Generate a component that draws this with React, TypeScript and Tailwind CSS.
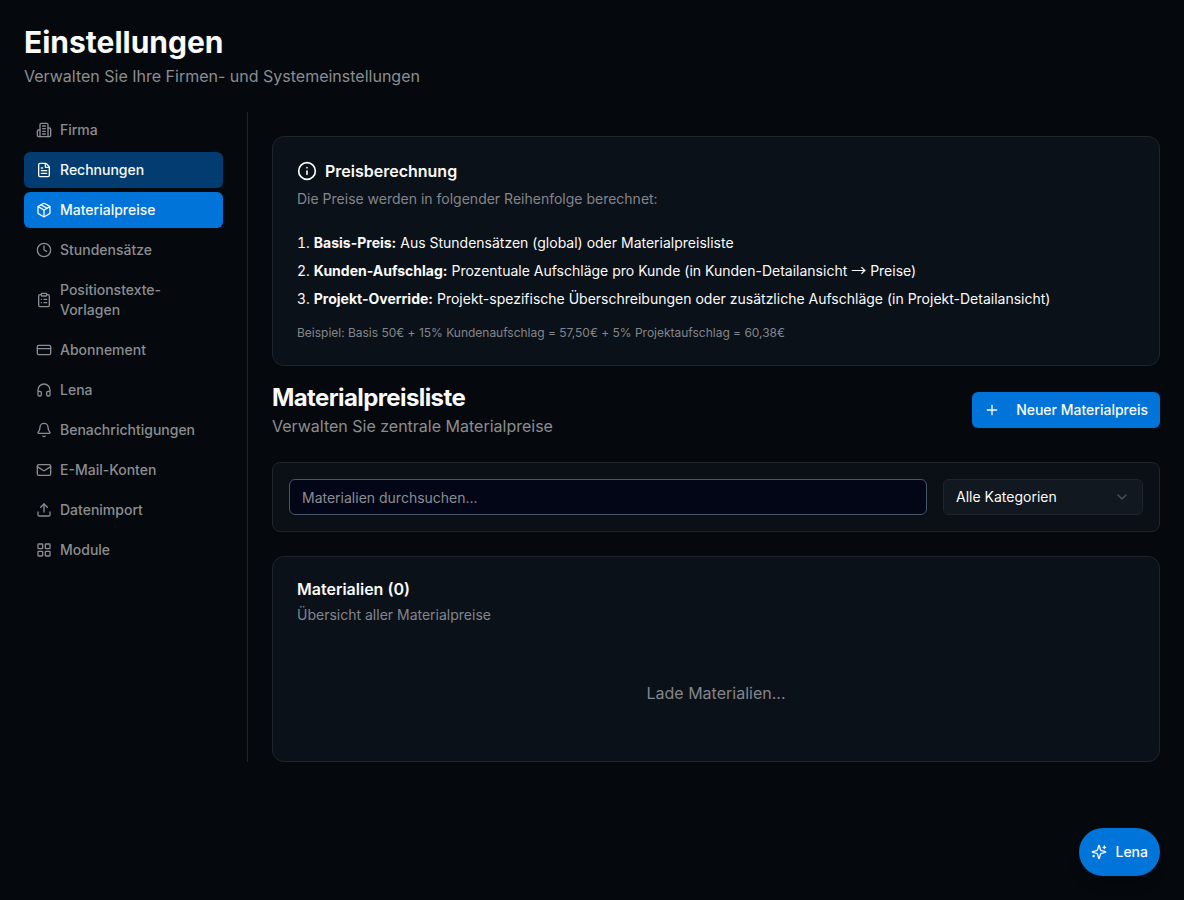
import { Building2, FileText, Package, Clock, ClipboardList, CreditCard, Headphones, Bell, Mail, Upload, LayoutGrid, Info, Plus, ChevronDown, type LucideIcon } from 'lucide-react';

const nav: { label: string; icon: LucideIcon; state?: 'hover' | 'active' }[] = [
  { label: 'Firma', icon: Building2 },
  { label: 'Rechnungen', icon: FileText, state: 'hover' },
  { label: 'Materialpreise', icon: Package, state: 'active' },
  { label: 'Stundensätze', icon: Clock },
  { label: 'Positionstexte-Vorlagen', icon: ClipboardList },
  { label: 'Abonnement', icon: CreditCard },
  { label: 'Lena', icon: Headphones },
  { label: 'Benachrichtigungen', icon: Bell },
  { label: 'E-Mail-Konten', icon: Mail },
  { label: 'Datenimport', icon: Upload },
  { label: 'Module', icon: LayoutGrid },
];

const tone = {
  idle: 'text-[#8b8d91]',
  hover: 'bg-[#023c70] text-[#f8fafc]',
  active: 'bg-[#0074d9] text-[#f8fafc]',
};

const stroke = { fill: 'none', stroke: 'currentColor', strokeWidth: 2, strokeLinecap: 'round', strokeLinejoin: 'round' } as const;

function BuildingIcon({ className }: { className?: string }) {
  return (
    <svg viewBox="0 0 24 24" className={className} {...stroke}>
      <path d="M6 22V4a2 2 0 0 1 2-2h8a2 2 0 0 1 2 2v18Z" />
      <path d="M6 12H4a2 2 0 0 0-2 2v6a2 2 0 0 0 2 2h2" />
      <path d="M18 9h2a2 2 0 0 1 2 2v9a2 2 0 0 1-2 2h-2" />
      <path d="M10 6h4M10 10h4M10 14h4M10 18h4" />
    </svg>
  );
}

function SparklesIcon({ className }: { className?: string }) {
  return (
    <svg viewBox="0 0 24 24" className={className} {...stroke}>
      <path d="M9.937 15.5A2 2 0 0 0 8.5 14.063l-6.135-1.582a.5.5 0 0 1 0-.962L8.5 9.936A2 2 0 0 0 9.937 8.5l1.582-6.135a.5.5 0 0 1 .963 0L14.063 8.5A2 2 0 0 0 15.5 9.937l6.135 1.581a.5.5 0 0 1 0 .964L15.5 14.063a2 2 0 0 0-1.437 1.437l-1.582 6.135a.5.5 0 0 1-.963 0z" />
      <path d="M20 3v4M22 5h-4M4 17v2M5 18H3" />
    </svg>
  );
}

export default function App() {
  return (
    <div className="relative h-[900px] overflow-hidden bg-[#05090d] p-6 font-['Inter',sans-serif] text-base text-[#fafafa] antialiased">
      <header>
        <h1 className="text-3xl font-bold">Einstellungen</h1>
        <p className="mt-1 text-[#8b8d91]">Verwalten Sie Ihre Firmen- und Systemeinstellungen</p>
      </header>
      <div className="mt-6 flex h-[650px]">
        <nav className="flex w-56 shrink-0 flex-col gap-1 border-r border-[#20252b] pr-6">
          {nav.map(({ label, icon: Icon, state }) => (
            <a key={label} className={`flex items-center gap-2 rounded-md px-3 py-2 text-sm font-medium ${tone[state ?? 'idle']}`}>
              {Icon === Building2 ? <BuildingIcon className="size-4 shrink-0" /> : <Icon className="size-4 shrink-0" />}
              <span>{label}</span>
            </a>
          ))}
        </nav>
        <main className="min-w-0 flex-1 pt-6 pl-6">
          <section className="h-[230px] rounded-xl border border-[#20252b] bg-[#0b1118] p-6">
            <h2 className="flex h-5 items-center gap-2 font-semibold"><Info className="size-5" />Preisberechnung</h2>
            <p className="mt-2 text-sm text-[#83858c]">Die Preise werden in folgender Reihenfolge berechnet:</p>
            <ol className="mt-6 space-y-2 text-sm">
              <li><span className="tabular-nums">1.</span> <b>Basis-Preis:</b> Aus Stundensätzen (global) oder Materialpreisliste</li>
              <li className="h-5"><span className="tabular-nums">2.</span> <b>Kunden-Aufschlag:</b> Prozentuale Aufschläge pro Kunde (in Kunden-Detailansicht <span className="font-['Noto_Sans_CJK_JP'] text-[15px] leading-none">→</span> Preise)</li>
              <li><span className="tabular-nums">3.</span> <b>Projekt-Override:</b> Projekt-spezifische Überschreibungen oder zusätzliche Aufschläge (in Projekt-Detailansicht)</li>
            </ol>
            <p className="mt-4 text-xs tracking-[-0.012px] text-[#83858c]">Beispiel: Basis 50€ + 15% Kundenaufschlag = 57,50€ + 5% Projektaufschlag = 60,38€</p>
          </section>
          <div className="mt-4 flex items-center justify-between">
            <div>
              <h2 className="text-2xl font-bold tracking-tight">Materialpreisliste</h2>
              <p className="text-[#8b8d91]">Verwalten Sie zentrale Materialpreise</p>
            </div>
            <button className="flex h-9 items-center rounded-md bg-[#0074d9] px-3 text-sm font-medium"><Plus className="mr-4 size-4" />Neuer Materialpreis</button>
          </div>
          <section className="mt-6 flex h-[70px] gap-4 rounded-lg border border-[#20252b] bg-[#0b1017] p-4">
            <input placeholder="Materialien durchsuchen..." className="h-9 min-w-0 flex-1 rounded-md border border-[#475569] bg-[#020617] px-3 text-sm outline-none placeholder:text-[#8b8d91]" />
            <button className="flex h-9 w-[200px] items-center justify-between rounded-md border border-[#20252b] bg-[#11181f] px-3 text-sm">Alle Kategorien<ChevronDown className="size-4 text-[#8b8d91] opacity-50" /></button>
          </section>
          <section className="mt-6 h-[206px] rounded-xl border border-[#20252b] bg-[#0b1118] p-6">
            <h3 className="leading-4 font-semibold">Materialien (0)</h3>
            <p className="mt-2 text-sm text-[#83858c]">Übersicht aller Materialpreise</p>
            <p className="mt-14 text-center text-[#83858c]">Lade Materialien...</p>
          </section>
        </main>
      </div>
      <button className="absolute right-6 bottom-6 flex h-12 items-center gap-2 rounded-full bg-[#0074d9] px-3 text-sm font-medium shadow-lg"><SparklesIcon className="size-4" />Lena</button>
    </div>
  );
}
